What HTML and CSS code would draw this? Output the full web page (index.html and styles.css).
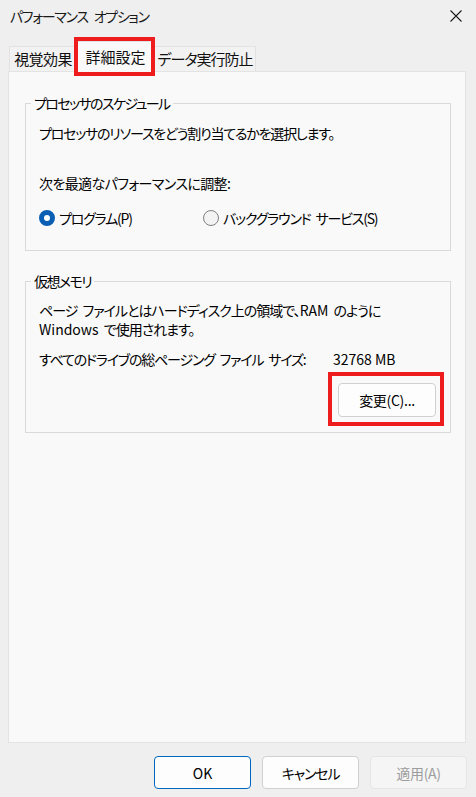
FILE: index.html
```html
<!DOCTYPE html>
<html lang="ja">
<head>
<meta charset="utf-8">
<title>パフォーマンス オプション</title>
<link rel="stylesheet" href="styles.css">
</head>
<body>
<div class="window">
  <header class="titlebar">
    <span class="title">パフォーマンス オプション</span>
    <svg class="close" width="12" height="12" viewBox="0 0 12 12"><path d="M0.5 0.5 L11.5 11.5 M11.5 0.5 L0.5 11.5" stroke="#1b1b1b" stroke-width="1.1" fill="none"/></svg>
  </header>
  <nav class="tabs">
    <div class="tab tab-visual">視覚効果</div>
    <div class="tab tab-active">詳細設定<span class="mark mark-tab"></span></div>
    <div class="tab tab-dep">データ実行防止</div>
  </nav>
  <main class="panel">
    <fieldset class="group">
      <legend class="legend">プロセッサのスケジュール</legend>
      <p class="line">プロセッサのリソースをどう割り当てるかを選択します。</p>
      <p class="line adjust">次を最適なパフォーマンスに調整:</p>
      <div class="radios">
        <label class="radio"><span class="dot dot-on"></span>プログラム(P)</label>
        <label class="radio"><span class="dot"></span>バックグラウンド サービス(S)</label>
      </div>
    </fieldset>
    <fieldset class="group group-vm">
      <legend class="legend">仮想メモリ</legend>
      <p class="para">ページ ファイルとはハードディスク上の領域で、<span class="latin">RAM</span> のように<br><span class="latin">Windows</span> で使用されます。</p>
      <div class="size-row">
        <span class="size-label">すべてのドライブの総ページング ファイル サイズ:</span>
        <span class="size-value latin">32768 MB</span>
      </div>
      <div class="change-row">
        <button class="btn btn-change">変更(C)...<span class="mark mark-btn"></span></button>
      </div>
    </fieldset>
  </main>
  <footer class="footer">
    <button class="btn btn-ok">OK</button>
    <button class="btn btn-kana">キャンセル</button>
    <button class="btn btn-disabled">適用(A)</button>
  </footer>
</div>
</body>
</html>
```

FILE: styles.css
```css
* { box-sizing: border-box; }
html, body {
  margin: 0;
  padding: 0;
}
body {
  width: 476px;
  height: 797px;
  overflow: hidden;
  background: #efefef;
  font-family: "Noto Sans CJK JP", "Noto Sans", sans-serif;
  font-feature-settings: "palt";
  font-size: 14px;
  letter-spacing: -1.2px;
  word-spacing: 3px;
  color: #000;
}
.latin { letter-spacing: 0; word-spacing: 0; }
.window {
  display: flex;
  flex-direction: column;
  height: 797px;
}
.titlebar {
  height: 31px;
  display: flex;
  align-items: center;
  justify-content: space-between;
  padding: 0 14px 0 10px;
}
.title {
  font-size: 14px;
  line-height: 20px;
  letter-spacing: -1.3px;
  word-spacing: 4px;
  color: #1a1a1a;
}
.close { display: block; }
.tabs {
  height: 40px;
  display: flex;
  align-items: flex-end;
  padding-left: 9px;
  position: relative;
  z-index: 1;
}
.tab {
  height: 25px;
  border: 1px solid #e2e2e2;
  border-bottom: none;
  background: #f2f2f2;
  padding-top: 1px;
  line-height: 22px;
  white-space: nowrap;
  text-align: center;
  font-size: 15px;
  letter-spacing: -0.6px;
  color: #111;
}
.tab-visual { width: 68px; }
.tab-dep { width: 102px; letter-spacing: -1px; }
.tab-active {
  position: relative;
  width: 77px;
  height: 31px;
  margin-bottom: -1px;
  background: #f9f9f9;
  padding-top: 0;
  line-height: 30px;
  letter-spacing: 0;
}
.mark {
  position: absolute;
  border: 4px solid #ee1c1c;
  pointer-events: none;
}
.mark-tab {
  top: -5px;
  left: -4px;
  right: -2px;
  bottom: -4px;
}
.panel {
  height: 672px;
  margin: 0 10px 0 8px;
  border: 1px solid #e3e3e3;
  background: #f9f9f9;
  padding: 21px 14px 0 16px;
}
.group {
  margin: 0;
  min-width: 0;
  border: 1px solid #dadada;
  padding: 10px 14px 22px 13px;
}
.legend {
  padding: 0 3px;
  margin-left: -8px;
  line-height: 20px;
  letter-spacing: -1.6px;
}
.line {
  margin: 0;
  line-height: 20px;
}
.adjust { margin-top: 30px; letter-spacing: -0.6px; }
.radios {
  display: grid;
  grid-template-columns: 164px auto;
  margin-top: 15px;
}
.radio {
  display: flex;
  align-items: center;
  line-height: 20px;
  white-space: nowrap;
}
.dot {
  width: 16px;
  height: 16px;
  border-radius: 50%;
  border: 1px solid #808080;
  background: #f3f3f3;
  margin-right: 4px;
  flex: none;
}
.dot-on {
  border: 5px solid #0a5fb4;
  background: #fff;
}
.group-vm {
  margin-top: 20px;
  padding-bottom: 15px;
}
.para {
  margin: 0;
  line-height: 19px;
  letter-spacing: -1px;
}
.size-row {
  display: flex;
  margin-top: 10px;
  line-height: 20px;
}
.size-label {
  width: 294px;
  white-space: nowrap;
}
.size-value { white-space: nowrap; }
.change-row {
  display: flex;
  justify-content: flex-end;
  margin-top: 14px;
}
.btn {
  position: relative;
  width: 97px;
  height: 33px;
  border: 1px solid #d0d0d0;
  border-radius: 4px;
  background: #fdfdfd;
  font-family: inherit;
  font-feature-settings: "palt";
  font-size: 14px;
  letter-spacing: -0.3px;
  color: #000;
  padding: 0;
}
.btn-kana { letter-spacing: -1.2px; }
.btn-change {
  width: 98px;
  height: 34px;
}
.mark-btn {
  top: -12px;
  left: -11px;
  right: -9px;
  bottom: -10px;
}
.footer {
  display: flex;
  justify-content: flex-end;
  gap: 11px;
  padding: 13px 9px 0 0;
}
.btn-ok {
  border: 1px solid #0067c0;
  letter-spacing: 0;
}
.btn-disabled {
  background: #f5f5f5;
  border-color: #e6e6e6;
  color: #9d9d9d;
}
```
